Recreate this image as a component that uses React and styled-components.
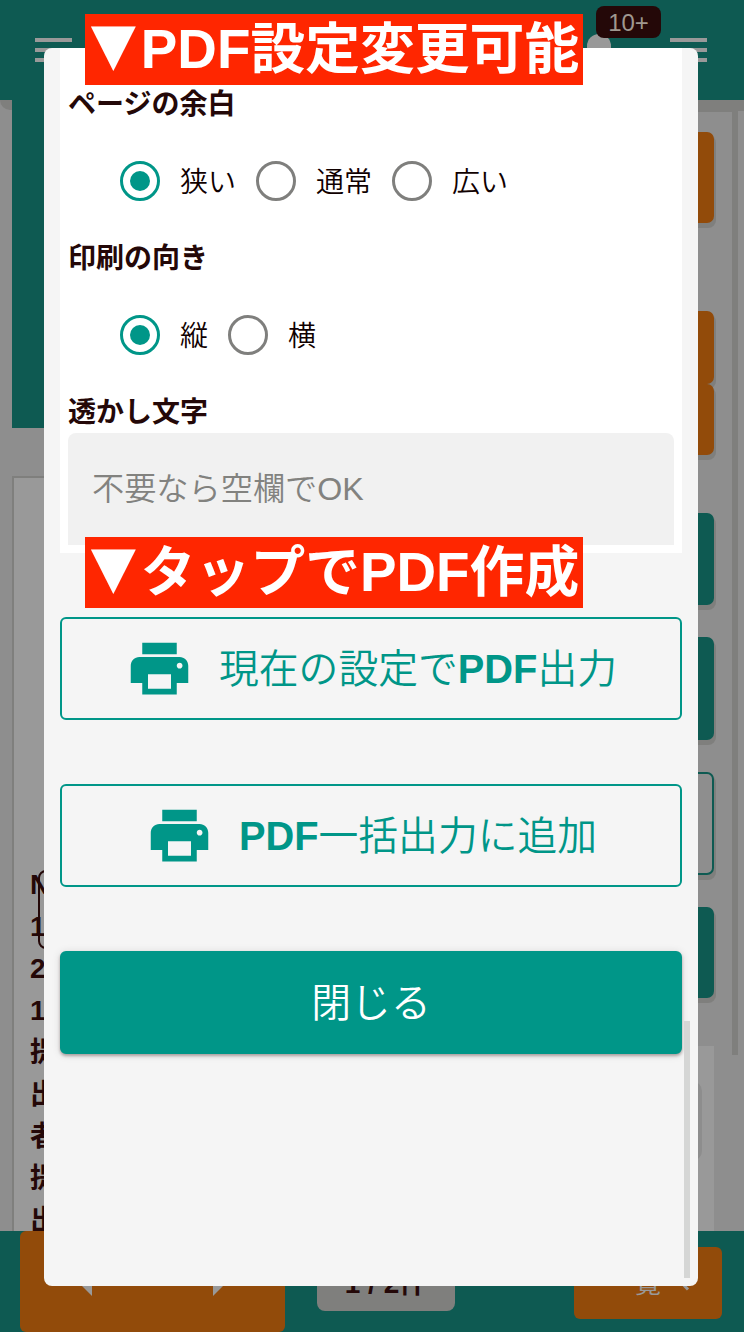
import React from "react";
import styled, { createGlobalStyle } from "styled-components";

const c = {
  teal: "#009688",
  tealDim: "#0e5a52",
  orangeDim: "#924b0a",
  backdrop: "#8e8e8e",
  panelDim: "#999999",
  shade: "#7f7f7d",
  ink: "#240808",
  red: "#ff2600",
  surface: "#f5f5f5",
};

const Global = createGlobalStyle`
  *, *::before, *::after { box-sizing: border-box; }
  body {
    margin: 0;
    font-family: "Liberation Sans", "Noto Sans CJK JP", sans-serif;
    color: ${c.ink};
  }
  button { font-family: inherit; margin: 0; padding: 0; }
`;

const Screen = styled.div`
  position: relative;
  width: 744px;
  height: 1332px;
  overflow: hidden;
  display: flex;
  flex-direction: column;
  background: ${c.backdrop};
`;

const Header = styled.header`
  height: 100px;
  flex: none;
  display: flex;
  justify-content: space-between;
  padding: 0 37px 0 35px;
  background: ${c.tealDim};
`;

const Menu = styled.span`
  width: 37px;
  margin-top: 38px;
  display: flex;
  flex-direction: column;
  gap: 6px;
  &::before, &::after, i { content: ""; height: 4px; background: ${c.panelDim}; }
`;

const HeaderRight = styled.div`
  display: flex;
  gap: 59px;
`;

const Bell = styled.span`
  position: relative;
  width: 24px;
  height: 30px;
  margin-top: 34px;
  border-radius: 12px 12px 0 0;
  background: ${c.panelDim};
`;

const Badge = styled.span`
  position: absolute;
  left: 9px;
  top: -28px;
  width: 65px;
  height: 32px;
  border-radius: 8px;
  background: ${c.ink};
  color: #a09890;
  font-size: 24px;
  line-height: 33px;
  text-align: center;
`;

const Body = styled.main`
  height: 1131px;
  flex: none;
  display: flex;
`;

const Edge = styled.div`
  width: 12px;
  height: 10px;
  background: ${c.shade};
  border-bottom-left-radius: 12px;
`;

const Left = styled.section`
  width: 360px;
  display: flex;
  flex-direction: column;
`;

const Banner = styled.div`
  height: 328px;
  background: ${c.tealDim};
`;

const Sheet = styled.div`
  flex: 1;
  min-height: 0;
  overflow: hidden;
  margin-top: 48px;
  padding: 386px 0 0 16px;
  border: 2px solid ${c.shade};
  border-bottom: 0;
  background: ${c.panelDim};
`;

const Column = styled.div`
  position: relative;
  width: 28px;
  font-size: 28px;
  font-weight: 700;
  line-height: 42px;
`;

const Cursor = styled.span`
  position: absolute;
  left: 8px;
  top: 6px;
  width: 40px;
  height: 79px;
  border: 2px solid ${c.ink};
  border-radius: 8px;
`;

const Right = styled.section`
  flex: 1;
  display: flex;
  flex-direction: column;
  border-top: 12px solid ${c.shade};
  padding-right: 18px;
`;

const Tile = styled.div`
  height: ${(p) => p.$h}px;
  margin-top: ${(p) => p.$gap}px;
  flex: none;
  border-radius: 7px;
  border: 2px solid ${(p) => p.$color};
  background: ${(p) => (p.$outline ? c.backdrop : p.$color)};
  box-shadow: 1px 4px 0 1px ${c.shade};
`;

const Panel = styled.div`
  flex: 1;
  margin-top: 48px;
  padding: 39px 16px 0 0;
  background: ${c.panelDim};
`;

const PanelButton = styled.div`
  height: 72px;
  border-radius: 6px;
  background: ${c.shade};
  box-shadow: 0 0 0 4px #8d8d8d;
`;

const Track = styled.div`
  width: 12px;
  border-top: 11px solid ${c.shade};
`;

const Thumb = styled.div`
  width: 6px;
  height: 944px;
  background: ${c.shade};
`;

const Footer = styled.footer`
  flex: 1;
  display: flex;
  align-items: flex-start;
  padding-left: 20px;
  background: ${c.tealDim};
`;

const Pager = styled.div`
  width: 265px;
  height: 101px;
  display: flex;
  justify-content: space-between;
  padding: 21px 50px 0;
  border-radius: 6px;
  background: ${c.orangeDim};
`;

const Count = styled.div`
  width: 138px;
  height: 60px;
  margin: 20px 0 0 32px;
  border-radius: 8px;
  background: ${c.shade};
  font-size: 28px;
  font-weight: 700;
  line-height: 66px;
  text-align: center;
`;

const ListButton = styled.div`
  width: 148px;
  height: 72px;
  margin: 16px 0 0 119px;
  padding: 0 0 4px 35px;
  display: flex;
  align-items: center;
  gap: 13px;
  border-radius: 6px;
  background: ${c.orangeDim};
  color: ${c.panelDim};
  font-size: 26px;
  svg { margin-top: 4px; }
`;

const Dialog = styled.section`
  position: absolute;
  left: 44px;
  top: 48px;
  width: 654px;
  height: 1238px;
  padding: 0 16px;
  border-radius: 8px;
  overflow: hidden;
  background: ${c.surface};
`;

const Settings = styled.div`
  height: 505px;
  padding: 35px 8px 0;
  background: #fff;
`;

const Label = styled.h2`
  margin: 0;
  height: 42px;
  font-size: 28px;
  font-weight: 700;
  line-height: 44px;
`;

const Options = styled.div`
  height: 112px;
  display: flex;
  align-items: center;
  gap: 20px;
  padding-left: 52px;
`;

const Option = styled.label`
  height: 40px;
  display: flex;
  gap: 20px;
  font-size: 28px;
  line-height: 43px;
  font-weight: 350;
  color: #100000;
`;

const Radio = styled.span`
  width: 40px;
  height: 40px;
  display: grid;
  place-items: center;
  border: 3.5px solid ${(p) => (p.$on ? c.teal : "#7f7f7d")};
  border-radius: 50%;
  &::after {
    content: "";
    width: 20px;
    height: 20px;
    border-radius: 50%;
    background: ${(p) => (p.$on ? c.teal : "transparent")};
  }
`;

const Field = styled.div`
  height: 112px;
  padding-left: 24px;
  border-radius: 8px 8px 0 0;
  background: #f1f1f1;
  color: #82827f;
  font-size: 32.2px;
  font-weight: 350;
  line-height: 113px;
`;

const Actions = styled.div`
  display: flex;
  flex-direction: column;
  gap: 64px;
  padding-top: 64px;
`;

const Action = styled.button`
  height: 103px;
  display: flex;
  align-items: center;
  justify-content: center;
  gap: 25px;
  border: 2px solid ${c.teal};
  border-radius: 6px;
  background: ${(p) => (p.$filled ? c.teal : "transparent")};
  color: ${(p) => (p.$filled ? "#fff" : c.teal)};
  box-shadow: ${(p) =>
    p.$filled
      ? "0 2px 3px rgba(36,8,8,.3), 0 1px 9px rgba(36,8,8,.12)"
      : "none"};
  font-size: 39.8px;
  font-weight: 350;
  line-height: 60px;
  b { font-weight: 700; }
`;

const ScrollThumb = styled.span`
  position: absolute;
  right: 8px;
  bottom: 8px;
  width: 6px;
  height: 257px;
  background: #d5d6d5;
`;

const Callout = styled.div`
  position: absolute;
  left: 85px;
  top: ${(p) => p.$top}px;
  width: 498px;
  height: 71px;
  background: ${c.red};
  color: #fff;
  font-size: 54.8px;
  font-weight: 700;
  line-height: 71px;
  white-space: nowrap;
  display: flex;
  padding-left: 1px;
`;

const Marker = styled.span`
  font-family: "Noto Sans CJK JP", sans-serif;
  line-height: 59px;
  transform: scaleX(0.87);
`;

const Printer = () => (
  <svg width="69" height="69" viewBox="0 0 24 24" fill="currentColor">
    <path d="M19 8H5c-1.66 0-3 1.34-3 3v6h4v4h12v-4h4v-6c0-1.66-1.34-3-3-3zm-3 11H8v-5h8v5zm3-7c-.55 0-1-.45-1-1s.45-1 1-1 1 .45 1 1-.45 1-1 1zm-1-9H6v4h12V3z" />
  </svg>
);

const Arrow = ({ next }) => (
  <svg width="22" height="44" viewBox="0 0 22 44" fill={c.panelDim}>
    <path d={next ? "M0 0L22 22L0 44Z" : "M22 0L0 22L22 44Z"} />
  </svg>
);

const RadioGroup = ({ items }) => (
  <Options>
    {items.map((text, i) => (
      <Option key={text}>
        <Radio $on={i === 0} />
        {text}
      </Option>
    ))}
  </Options>
);

const tiles = [
  { h: 91, gap: 20, color: c.orangeDim },
  { h: 73, gap: 88, color: c.orangeDim },
  { h: 71, gap: 0, color: c.orangeDim },
  { h: 92, gap: 58, color: c.tealDim },
  { h: 103, gap: 32, color: c.tealDim },
  { h: 103, gap: 32, color: c.tealDim, outline: true },
  { h: 91, gap: 32, color: c.tealDim },
];

export default function App() {
  return (
    <Screen>
      <Global />
      <Header>
        <Menu><i /></Menu>
        <HeaderRight>
          <Bell><Badge>10+</Badge></Bell>
          <Menu><i /></Menu>
        </HeaderRight>
      </Header>

      <Body>
        <Edge />
        <Left>
          <Banner />
          <Sheet>
            <Column>
              {["N", "1", "2", "1", "提", "出", "者", "提", "出"].map((t, i) => (
                <div key={i}>{t}</div>
              ))}
              <Cursor />
            </Column>
          </Sheet>
        </Left>
        <Right>
          {tiles.map((t, i) => (
            <Tile key={i} $h={t.h} $gap={t.gap} $color={t.color} $outline={t.outline} />
          ))}
          <Panel><PanelButton /></Panel>
        </Right>
        <Track><Thumb /></Track>
      </Body>

      <Footer>
        <Pager><Arrow /><Arrow next /></Pager>
        <Count>1 / 2件</Count>
        <ListButton>
          一覧
          <svg width="16" height="16" viewBox="0 0 16 16" fill="none" stroke={c.panelDim} strokeWidth="3">
            <path d="M3 3L14 14.5" />
          </svg>
        </ListButton>
      </Footer>

      <Dialog>
        <Settings>
          <Label>ページの余白</Label>
          <RadioGroup items={["狭い", "通常", "広い"]} />
          <Label>印刷の向き</Label>
          <RadioGroup items={["縦", "横"]} />
          <Label>透かし文字</Label>
          <Field>不要なら空欄でOK</Field>
        </Settings>
        <Actions>
          <Action>
            <Printer />
            <span>現在の設定で<b>PDF</b>出力</span>
          </Action>
          <Action>
            <Printer />
            <span><b>PDF</b>一括出力に追加</span>
          </Action>
          <Action $filled>閉じる</Action>
        </Actions>
        <ScrollThumb />
      </Dialog>

      <Callout $top={14}><Marker>▼</Marker>PDF設定変更可能</Callout>
      <Callout $top={537}><Marker>▼</Marker>タップでPDF作成</Callout>
    </Screen>
  );
}
